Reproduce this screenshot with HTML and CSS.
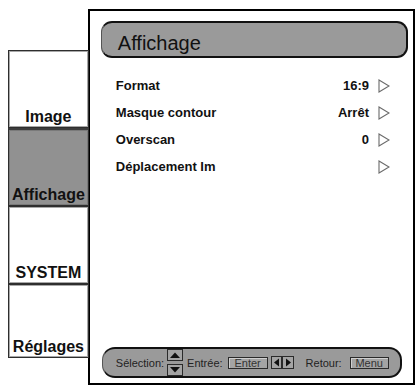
FILE: index.html
```html
<!DOCTYPE html>
<html lang="fr">
<head>
<meta charset="utf-8">
<title>Affichage</title>
<link rel="stylesheet" href="styles.css">
</head>
<body>
<div class="screen">
  <nav class="tabs">
    <div class="tab"><span>Image</span></div>
    <div class="tab active"><span>Affichage</span></div>
    <div class="tab"><span>SYSTEM</span></div>
    <div class="tab last"><span>Réglages</span></div>
  </nav>
  <main class="panel">
    <div class="title">Affichage</div>
    <ul class="rows">
      <li class="row"><span class="label">Format</span><span class="value">16:9</span><svg class="arrow" viewBox="0 0 12 14"><polygon points="1,1 11,7 1,13"/></svg></li>
      <li class="row"><span class="label">Masque contour</span><span class="value">Arrêt</span><svg class="arrow" viewBox="0 0 12 14"><polygon points="1,1 11,7 1,13"/></svg></li>
      <li class="row"><span class="label">Overscan</span><span class="value">0</span><svg class="arrow" viewBox="0 0 12 14"><polygon points="1,1 11,7 1,13"/></svg></li>
      <li class="row"><span class="label">Déplacement Im</span><span class="value"></span><svg class="arrow" viewBox="0 0 12 14"><polygon points="1,1 11,7 1,13"/></svg></li>
    </ul>
    <div class="helpbar">
      <span class="hint">Sélection:</span>
      <svg class="updown" viewBox="0 0 16 27">
        <rect x="0.5" y="0.5" width="15" height="11" />
        <polygon class="tri" points="3,9 8,3.5 13,9"/>
        <rect x="0.5" y="15.5" width="15" height="11" />
        <polygon class="tri" points="3,18 8,23.5 13,18"/>
      </svg>
      <span class="hint">Entrée:</span>
      <span class="key enter">Enter</span>
      <svg class="lr" viewBox="0 0 23 13">
        <rect x="0.5" y="0.5" width="10" height="12" />
        <polygon class="tri" points="8,2.5 3,6.5 8,10.5"/>
        <rect x="11.5" y="0.5" width="11" height="12" />
        <polygon class="tri" points="15,2.5 20,6.5 15,10.5"/>
      </svg>
      <span class="hint retour">Retour:</span>
      <span class="key menu">Menu</span>
    </div>
  </main>
</div>
</body>
</html>
```
FILE: styles.css
```css
html, body {
  margin: 0;
  padding: 0;
}
body {
  width: 415px;
  height: 387px;
  background: #fff;
  overflow: hidden;
  font-family: "Liberation Sans", Arial, sans-serif;
  color: #111;
}
.screen {
  display: flex;
  align-items: flex-start;
  box-sizing: border-box;
  height: 387px;
  padding: 9px 0 0 8px;
}
.tabs {
  position: relative;
  z-index: 1;
  width: 81px;
  margin-top: 41px;
  margin-right: -1px;
  display: flex;
  flex-direction: column;
}
.tab {
  height: 78px;
  box-sizing: border-box;
  border: 1px solid #2e2e2e;
  box-shadow: inset 0 0 0 1px #a8a8a8;
  background: #fff;
  display: flex;
  align-items: flex-end;
  justify-content: center;
  padding-bottom: 2px;
  font-size: 16px;
  line-height: 16px;
  font-weight: bold;
  color: #111;
}
.tab.last {
  height: 74px;
}
.tab.active {
  background: #919191;
  border-top: 2px solid #3c3c3c;
  box-shadow: inset 0 0 0 1px #7a7a7a;
}
.panel {
  width: 328px;
  height: 376px;
  box-sizing: border-box;
  border: 2px solid #000;
  background: #fff;
  display: flex;
  flex-direction: column;
}
.title {
  margin: 10px 5px 0 11px;
  height: 37px;
  box-sizing: border-box;
  border: 2px solid #111;
  border-left: 1px solid #555;
  border-radius: 11px;
  background: #9a9a9a;
  padding: 10px 0 0 16px;
  font-size: 20px;
  line-height: 20px;
  color: #111;
}
.rows {
  list-style: none;
  margin: 14px 0 0 0;
  padding: 0 23px 0 26px;
}
.row {
  display: flex;
  align-items: center;
  height: 27px;
  line-height: 27px;
  font-size: 13px;
  font-weight: bold;
}
.label {
  flex: 1;
}
.value {
  margin-right: 9px;
}
.arrow {
  width: 12px;
  height: 14px;
}
.arrow polygon {
  fill: #fff;
  stroke: #6a6a6a;
  stroke-width: 1.1;
}
.helpbar {
  margin: auto 11px 5px 12px;
  height: 31px;
  box-sizing: border-box;
  border: 2px solid #111;
  border-left: 1px solid #555;
  border-radius: 13px;
  background: #9a9a9a;
  display: flex;
  align-items: center;
  padding-left: 13px;
  font-size: 11px;
  color: #222;
}
.updown {
  width: 16px;
  height: 27px;
  margin: 0 4px 0 3px;
}
.updown rect, .lr rect {
  fill: #a4a4a4;
  stroke: #2a2a2a;
  stroke-width: 1;
}
.tri {
  fill: #111;
}
.key {
  box-sizing: border-box;
  height: 12px;
  line-height: 10px;
  border: 1px solid #2a2a2a;
  box-shadow: inset 1px 1px 0 #cfcfcf;
  background: #a4a4a4;
  text-align: center;
  color: #333;
}
.enter {
  width: 40px;
  margin-left: 5px;
}
.lr {
  width: 23px;
  height: 13px;
  margin-left: 3px;
}
.retour {
  margin-left: 12px;
}
.menu {
  width: 39px;
  margin-left: 8px;
}
```
